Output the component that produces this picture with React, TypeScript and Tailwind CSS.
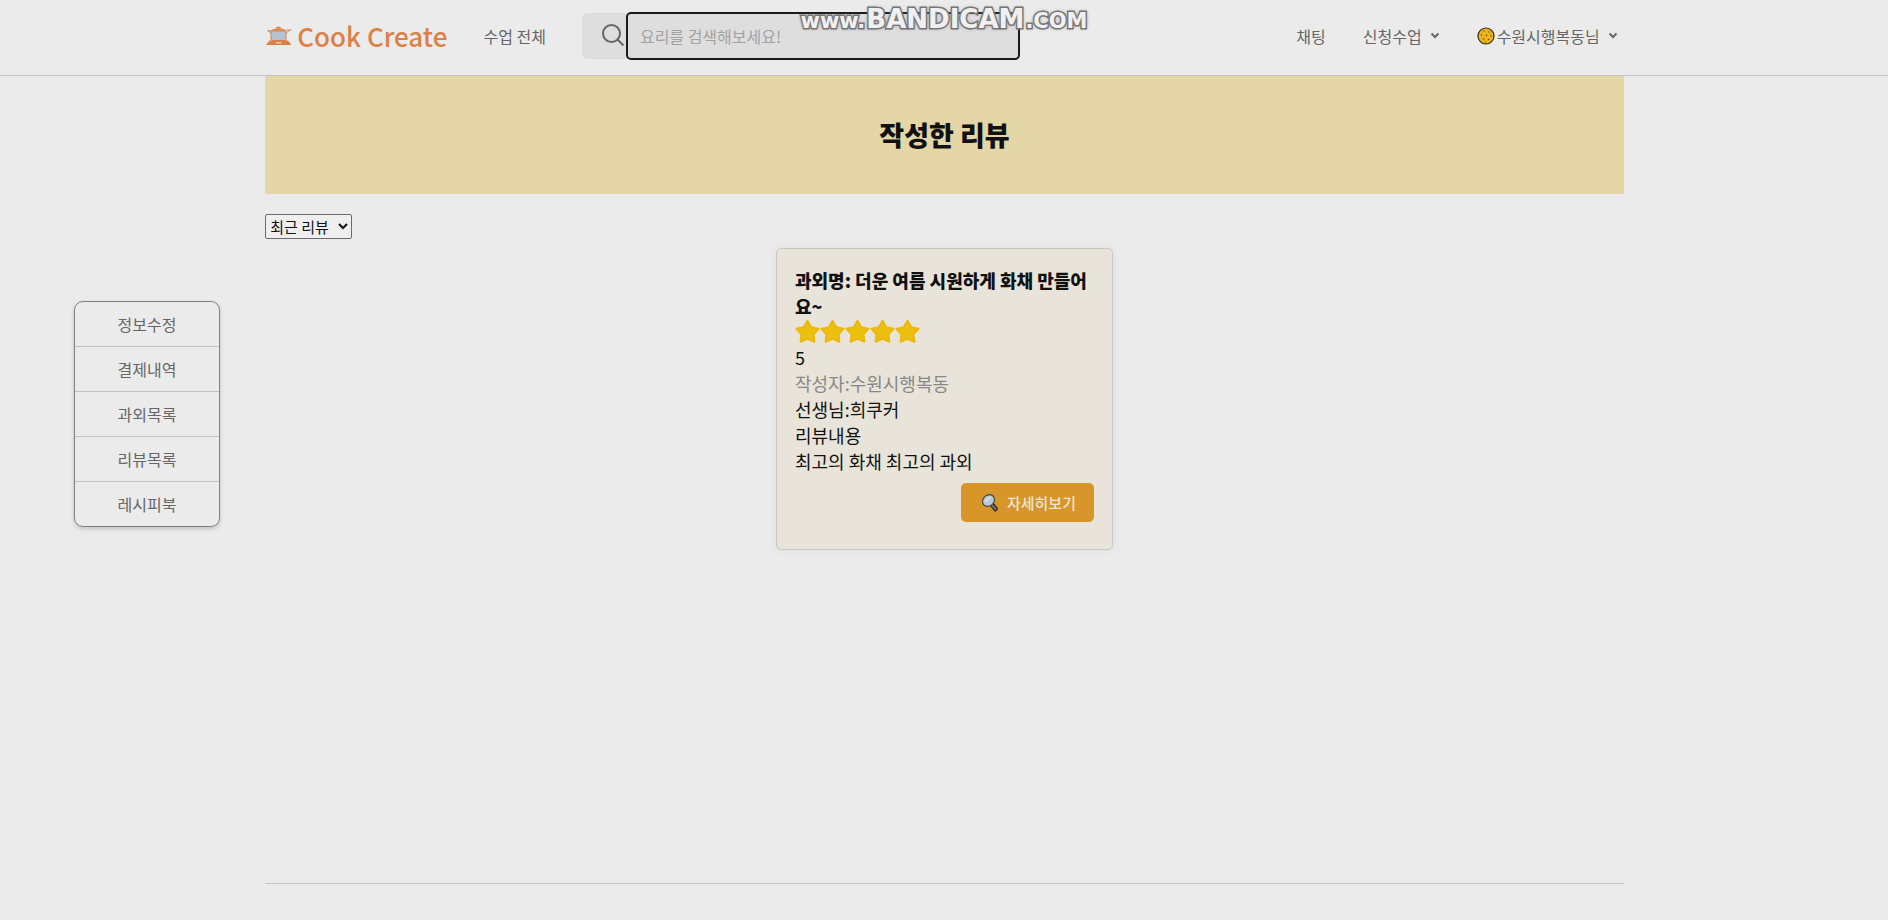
import React from "react";

const sideLinks = ["정보수정", "결제내역", "과외목록", "리뷰목록", "레시피북"];

function PotIcon() {
  return (
    <svg viewBox="0 0 28 20" className="h-5 w-7 shrink-0" aria-hidden="true">
      <path d="M6 5h15v8.500q0 1-1 1H7q-1 0-1-1z" fill="#b3c4d0" stroke="#d98245" strokeWidth="1" />
      <path d="M5.500 4.800Q8 2.200 13.500 2.200t8 2.600z" fill="#d98245" />
      <path d="M12 1.500h3" stroke="#d98245" strokeWidth="1.600" strokeLinecap="round" />
      <path d="M2.500 4.700h3.500M3 5l3 2M21 7l3.500-2.500M21.500 4h5" stroke="#d98245" strokeWidth="1" fill="none" />
      <path d="M4.500 14.500h18.500l3.500 4.500H1z" fill="#d98245" />
      <path d="M11 16.800h5.500" stroke="#f0d9c4" strokeWidth="1.200" />
    </svg>
  );
}

function CookieIcon() {
  return (
    <svg viewBox="0 0 18 18" className="h-[18px] w-[18px] shrink-0" aria-hidden="true">
      <circle cx="9" cy="9" r="8" fill="#ecb41c" stroke="#33291d" strokeWidth="1.200" />
      <g fill="#6a3e16">
        <circle cx="7" cy="4" r="0.700" />
        <circle cx="12" cy="5" r="0.700" />
        <circle cx="4.500" cy="8" r="0.700" />
        <circle cx="9.500" cy="8.500" r="0.800" />
        <circle cx="14" cy="9" r="0.700" />
        <circle cx="6.500" cy="12" r="0.700" />
        <circle cx="11.500" cy="12.500" r="0.800" />
        <circle cx="8.500" cy="15" r="0.600" />
      </g>
    </svg>
  );
}

function MagnifierIcon() {
  return (
    <svg viewBox="0 0 18 18" className="h-[18px] w-[18px] shrink-0" aria-hidden="true">
      <path d="M10.500 10l4 5" stroke="#222" strokeWidth="4.500" strokeLinecap="round" />
      <path d="M11 11l3.500 4" stroke="#777" strokeWidth="2.200" strokeLinecap="round" />
      <ellipse cx="7.500" cy="6.500" rx="6.400" ry="5.400" transform="rotate(-40 7.500 6.500)" fill="#b9cbd8" stroke="#444" strokeWidth="1.200" />
      <path d="M4 8l5.500-5" stroke="#dbe5eb" strokeWidth="1.500" />
    </svg>
  );
}

function Chevron() {
  return (
    <svg viewBox="0 0 10 8" className="h-2 w-[10px] shrink-0" fill="none" stroke="currentColor" strokeWidth="2" aria-hidden="true">
      <path d="M1.500 1.500l3.500 3.500 3.500-3.500" />
    </svg>
  );
}

function Star() {
  return (
    <svg viewBox="0 0 24 24" className="size-[25px]" fill="#ebc10d" stroke="#ebb90d" strokeWidth="2" strokeLinejoin="round" aria-hidden="true">
      <path d="M12 1.800l3.600 6.200 7 1.400-4.900 5.200.9 7.200L12 19l-6.600 2.800.9-7.200L1.400 9.400l7-1.400z" />
    </svg>
  );
}

function Watermark() {
  return (
    <div className="pointer-events-none absolute left-[42.400%] top-0 flex h-9 items-baseline gap-px whitespace-nowrap font-['DejaVu_Sans',sans-serif] font-bold text-[#f0f0f0] [paint-order:stroke_fill] [-webkit-text-stroke:3px_#6f6f6f] [text-shadow:0_0_4px_#888]">
      <span className="text-[21px]">www.</span>
      <span className="text-[26px]">BANDICAM</span>
      <span className="text-[21px]">.COM</span>
    </div>
  );
}

function Header() {
  return (
    <header className="relative border-b border-[#c4c4c4]">
      <div className="mx-auto flex h-[75px] w-[72%] items-center pb-1 pl-px text-base text-[#666]">
        <a href="#home" className="flex items-center gap-1 text-[26px] font-medium text-[#dc8046]">
          <PotIcon />
          <span>Cook Create</span>
        </a>
        <a href="#classes" className="ml-9">수업 전체</a>
        <form className="ml-9 flex h-[46px] items-center rounded-md bg-[#dedede]" onSubmit={(e) => e.preventDefault()}>
          <label htmlFor="search" className="pl-5">
            <svg viewBox="0 0 24 24" className="h-6 w-6" fill="none" stroke="#666" strokeWidth="2" aria-hidden="true">
              <circle cx="9.500" cy="9.500" r="8.500" />
              <path d="M15.500 15.500l6 6" />
            </svg>
          </label>
          <input
            id="search"
            type="text"
            aria-label="요리 검색"
            placeholder="요리를 검색해보세요!"
            className="h-12 w-[394px] rounded-[5px] border-2 border-[#181a1c] bg-[#dedede] px-3 outline-none placeholder:text-[#a2a2a2]"
          />
        </form>
        <nav className="ml-auto mr-[6px] flex items-center gap-[37px]">
          <a href="#chat">채팅</a>
          <button className="flex items-center gap-2">신청수업<Chevron /></button>
          <button className="flex items-center gap-2">
            <span className="flex items-center gap-[2px]"><CookieIcon />수원시행복동님</span>
            <Chevron />
          </button>
        </nav>
      </div>
      <Watermark />
    </header>
  );
}

function ReviewCard() {
  return (
    <article className="mx-auto mt-[9px] w-[337px] rounded-[5px] border border-[#c8c8c8] bg-[#e8e4d9] px-[18px] pb-[27px] pt-[18px] text-lg leading-[26px] shadow-[0_0_8px_rgba(0,0,0,0.06)]">
      <h2 className="break-all font-black">과외명: 더운 여름 시원하게 화채 만들어요~</h2>
      <div className="flex h-[25px]">
        <Star /><Star /><Star /><Star /><Star />
      </div>
      <p>5</p>
      <p className="text-[#888]">작성자:수원시행복동</p>
      <p>선생님:희쿠커</p>
      <p>리뷰내용</p>
      <p>최고의 화채 최고의 과외</p>
      <div className="mt-[9px] flex justify-end">
        <button className="flex h-[39px] items-center gap-2 rounded-[5px] bg-[#d89529] pl-5 pr-[18px] text-[15px] font-medium text-[#ece5da]">
          <MagnifierIcon />
          자세히보기
        </button>
      </div>
    </article>
  );
}

export default function App() {
  return (
    <div className="flex min-h-screen flex-col bg-[#ebebeb] font-['Noto_Sans_CJK_KR',sans-serif] text-[#111]">
      <Header />
      <div className="grid grow grid-cols-[14%_72%_14%]">
        <aside className="pl-[74px] pt-[225px]">
          <ul className="w-[146px] divide-y divide-[#c2c2c2] rounded-[9px] border border-[#808080] text-center text-base text-[#666] shadow-[0_2px_4px_rgba(0,0,0,0.18)]">
            {sideLinks.map((label) => (
              <li key={label}>
                <a href="#my" className="block leading-[44px]">{label}</a>
              </li>
            ))}
          </ul>
        </aside>
        <main className="flex flex-col pl-px">
          <div className="flex h-[118px] items-center justify-center bg-[#e4d6a7]">
            <h1 className="text-[27px] font-black">작성한 리뷰</h1>
          </div>
          <div className="mt-5 flex">
            <select aria-label="정렬" className="h-[25px] w-[87px] rounded-[2px] border border-[#6b6b6b] bg-[#efefef] text-[15px]">
              <option>최근 리뷰</option>
            </select>
          </div>
          <ReviewCard />
          <footer className="mt-auto h-[37px] border-t border-[#c4c4c4]" />
        </main>
      </div>
    </div>
  );
}
